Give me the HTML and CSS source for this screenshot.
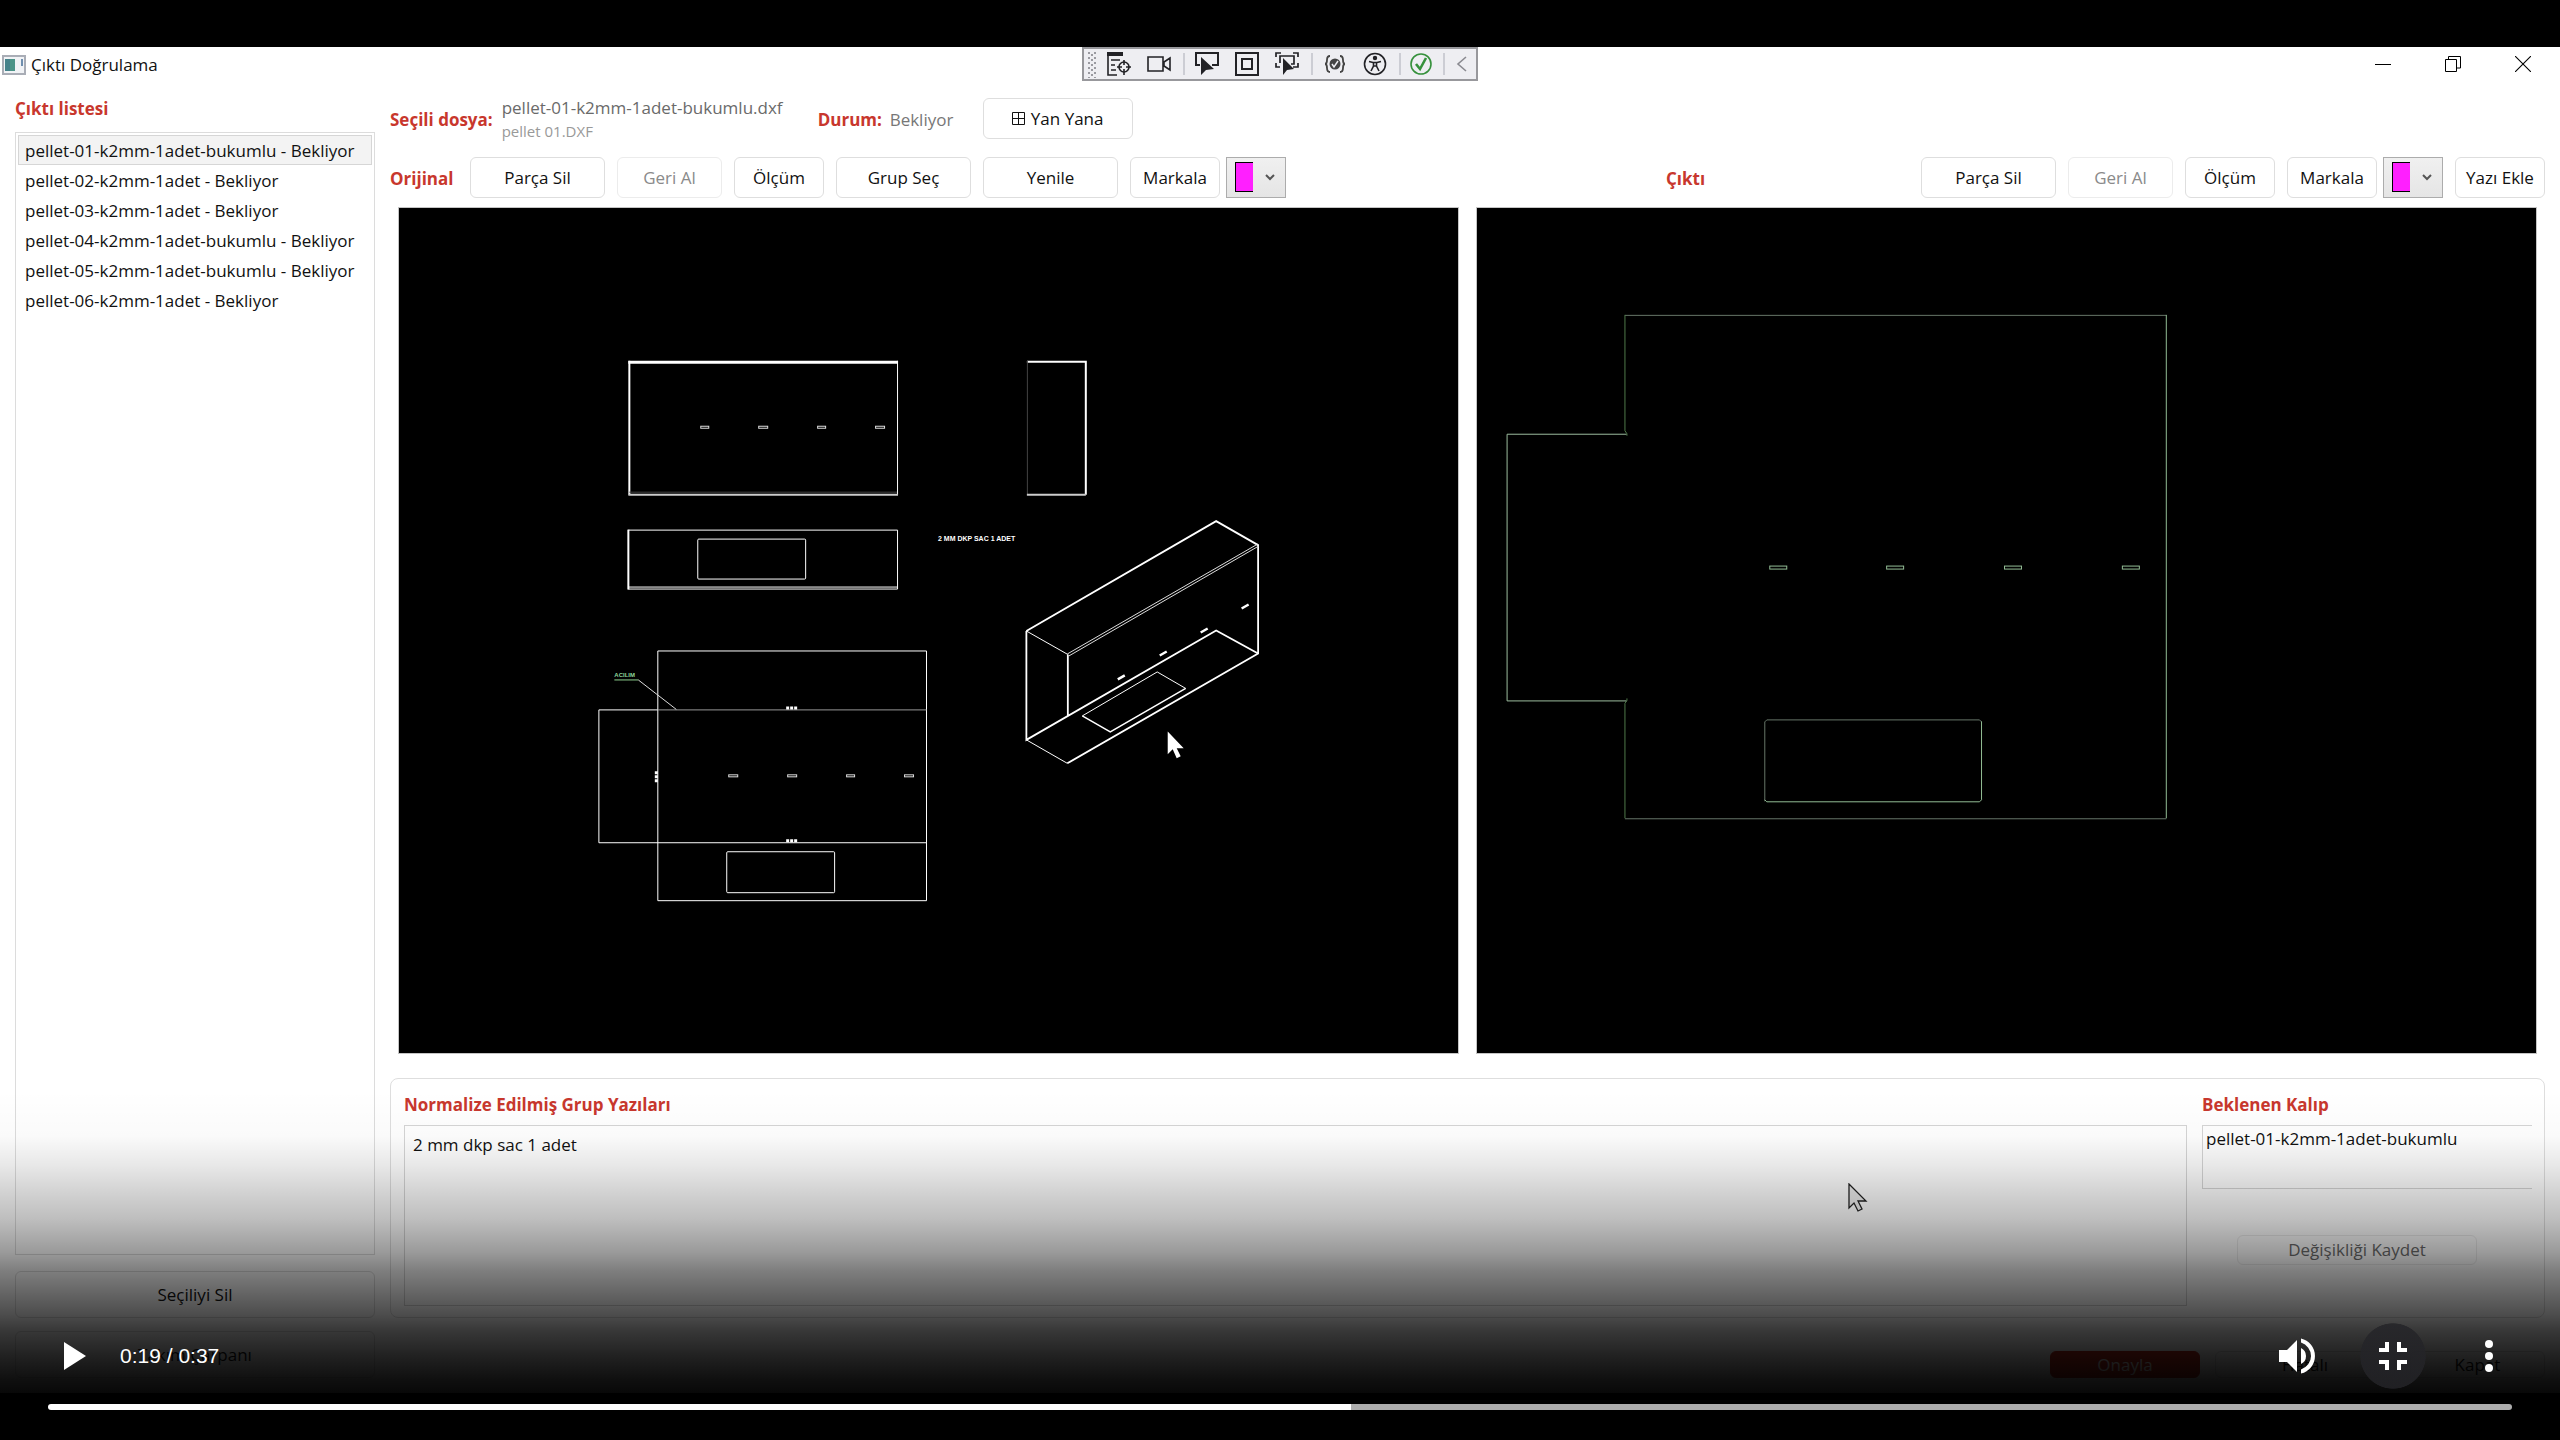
FILE: index.html
```html
<!DOCTYPE html>
<html lang="tr">
<head>
<meta charset="utf-8">
<title>Çıktı Doğrulama</title>
<link rel="stylesheet" href="styles.css">
</head>
<body>
<div class="player">
  <div class="stage">
    <header class="titlebar">
      <div class="titlebar-name">
        <svg class="app-icon" width="24" height="20" viewBox="0 0 24 20" aria-hidden="true"><rect x="1" y="1" width="22" height="18" fill="#f1f3f6" stroke="#a9adb6" stroke-width="2"/><rect x="3" y="4" width="10" height="12" fill="#4c9488"/><path d="M3 4h5v12H3z" fill="#3d6f8c" opacity=".5"/><path d="M20 4v7" stroke="#6f8faf" stroke-width="2"/></svg>
        <span>Çıktı Doğrulama</span>
      </div>
      <div class="debug-bar">
        <svg class="grip" width="15" height="30" viewBox="0 0 15 30" aria-hidden="true"><path d="M5 3v26M11 3v26" stroke="#9a9aa0" stroke-width="2" stroke-dasharray="2 3"/><path d="M8 5v22" stroke="#9a9aa0" stroke-width="2" stroke-dasharray="2 3"/></svg>
        <button class="tool" aria-label="Canlı görsel ağaç"><svg width="24" height="24" viewBox="0 0 24 24" fill="none" stroke="#222226" stroke-width="1.6"><path d="M0 0h16v4H0z" fill="#222226" stroke="none"/><path d="M1 3v20h9M4 8h9M4 13h4M4 18h5"/><circle cx="17" cy="15" r="5"/><path d="M17 8v5M17 17v6M10 15h5M19 15h5"/></svg></button>
        <button class="tool" aria-label="Kayıt"><svg width="24" height="24" viewBox="0 0 24 24" fill="none" stroke="#222226" stroke-width="1.6"><path d="M1 5h15v14H1zM17 10l6-4v12l-6-4z"/></svg></button>
        <span class="sep"></span>
        <button class="tool" aria-label="Öğe seç"><svg width="24" height="24" viewBox="0 0 24 24"><path d="M5 13H1V1h22v12h-6" fill="none" stroke="#222226" stroke-width="2"/><path d="M6 5v18l5-5 8-1z" fill="#222226"/></svg></button>
        <button class="tool" aria-label="Yerleşim süsleri"><svg width="24" height="24" viewBox="0 0 24 24" fill="none" stroke="#222226" stroke-width="2"><path d="M1 1h22v22H1zM7 7h10v10H7z"/></svg></button>
        <button class="tool" aria-label="Odaklı öğe"><svg width="24" height="24" viewBox="0 0 24 24"><path d="M1 5V1h5M18 1h5v4M1 11v4h4M18 15h5v-4M5 11V4h14v8h-3" fill="none" stroke="#222226" stroke-width="1.7"/><path d="M8 6v17l4-5 7-1z" fill="#222226"/></svg></button>
        <span class="sep"></span>
        <button class="tool" aria-label="Bağlama hataları"><svg width="24" height="24" viewBox="0 0 24 24"><path d="M7 4Q4 4 4 8q0 4-2 4 2 0 2 4 0 4 3 4M17 4q3 0 3 4 0 4 2 4-2 0-2 4 0 4-3 4" fill="none" stroke="#444" stroke-width="1.800"/><circle cx="12" cy="12" r="5.500" fill="#444"/><path d="M9 12l2 3 4-6" fill="none" stroke="#eeeef2" stroke-width="1.5"/></svg></button>
        <button class="tool" aria-label="Erişilebilirlik"><svg width="24" height="24" viewBox="0 0 24 24" fill="none" stroke="#222226" stroke-width="1.6"><circle cx="12" cy="12" r="10.5"/><circle cx="12" cy="6" r="1.4" fill="#222226"/><path d="M6 9.500l4 1h4l4-1M10.500 10v4l-2.500 5M13.500 10v4l2.500 5M10.500 14h3"/></svg></button>
        <span class="sep"></span>
        <button class="tool tool-mid" aria-label="Etkin"><svg width="24" height="24" viewBox="0 0 24 24" fill="none" stroke="#36913c"><circle cx="12" cy="12" r="10" stroke-width="1.6"/><path d="M7 12l4 5 6-11" stroke-width="2.6"/></svg></button>
        <span class="sep"></span>
        <button class="tool tool-small" aria-label="Daralt"><svg width="24" height="24" viewBox="0 0 24 24" fill="none" stroke="#8a8a90" stroke-width="1.6"><path d="M16 5l-8 7 8 7"/></svg></button>
      </div>
      <div class="window-buttons">
        <button aria-label="Simge durumuna küçült"><svg width="16" height="16" viewBox="0 0 16 16" fill="none" stroke="#000"><path d="M0 8.500h16"/></svg></button>
        <button aria-label="Geri yükle"><svg width="16" height="16" viewBox="0 0 16 16" fill="none" stroke="#000"><path d="M.5 3.500h11v12H.5zM3.500 3V.5h12v11.500H12"/></svg></button>
        <button aria-label="Kapat"><svg width="16" height="16" viewBox="0 0 16 16" fill="none" stroke="#000"><path d="M0 0l16 16M16 0L0 16" stroke-width="1.100"/></svg></button>
      </div>
    </header>

    <div class="workspace">
      <aside class="sidebar">
        <h2 class="heading" id="list-title">Çıktı listesi</h2>
        <ul class="file-list" role="listbox" aria-labelledby="list-title">
          <li role="option" aria-selected="true">pellet-01-k2mm-1adet-bukumlu - Bekliyor</li>
          <li role="option">pellet-02-k2mm-1adet - Bekliyor</li>
          <li role="option">pellet-03-k2mm-1adet - Bekliyor</li>
          <li role="option">pellet-04-k2mm-1adet-bukumlu - Bekliyor</li>
          <li role="option">pellet-05-k2mm-1adet-bukumlu - Bekliyor</li>
          <li role="option">pellet-06-k2mm-1adet - Bekliyor</li>
        </ul>
        <button class="btn btn-side">Seçiliyi Sil</button>
        <button class="btn btn-side">Takım Çarpanı</button>
      </aside>

      <main class="main">
        <div class="file-bar">
          <span class="heading">Seçili dosya:</span>
          <div class="file-names"><span>pellet-01-k2mm-1adet-bukumlu.dxf</span><small>pellet 01.DXF</small></div>
          <span class="heading status-label">Durum:</span>
          <span class="status">Bekliyor</span>
          <button class="btn btn-view"><svg width="13" height="13" viewBox="0 0 13 13" fill="none" stroke="#111" aria-hidden="true"><path d="M.5 .5h12v12H.5zM6.500 .5v12M.5 6.500h12"/></svg>Yan Yana</button>
        </div>

        <div class="panes">
          <section class="pane">
            <div class="pane-bar">
              <h2 class="heading pane-title">Orijinal</h2>
              <button class="btn btn-lg">Parça Sil</button>
              <button class="btn btn-md" disabled>Geri Al</button>
              <button class="btn btn-sm">Ölçüm</button>
              <button class="btn btn-lg">Grup Seç</button>
              <button class="btn btn-lg">Yenile</button>
              <div class="mark-group">
                <button class="btn btn-sm">Markala</button>
                <span class="color-select"><select aria-label="İşaret rengi"><option value="#ff1fff" aria-label="Macenta"></option></select><i class="swatch"></i><svg class="chevron" width="10" height="8" viewBox="0 0 10 8" fill="none" stroke="#555" stroke-width="2"><path d="M1 1l4 4 4-4"/></svg></span>
              </div>
            </div>
            <svg class="canvas" viewBox="399 208 1059 846" fill="none" stroke="#fff">
              <path d="M628 362.500H898" stroke-width="3"/><path d="M629 361V495" stroke-width="2"/><path d="M897.500 361V495"/><path d="M628 495H898" stroke="#ccc" stroke-width="2"/><path d="M629 492.500H897" stroke="#444"/>
              <path d="M1027 362H1087M1086 361V495" stroke-width="2"/><path d="M1027.500 361V495" stroke="#444"/><path d="M1027 495H1086" stroke="#ccc" stroke-width="2"/>
              <g stroke="#ddd"><rect x="700.500" y="426.500" width="8" height="2"/><rect x="758.500" y="426.500" width="9" height="2"/><rect x="817.500" y="426.500" width="8" height="2"/><rect x="875.500" y="426.500" width="9" height="2"/>
              <rect x="728.500" y="775.500" width="9" height="2"/><rect x="787.500" y="775.500" width="9" height="2"/><rect x="846.500" y="775.500" width="8" height="2"/><rect x="904.500" y="775.500" width="9" height="2"/></g>
              <path d="M628 530.500H897.500V589.500H628M628 587.500H897"/><path d="M628 530V590" stroke-width="2"/>
              <rect x="697.500" y="539.500" width="108" height="40" rx="1"/>
              <text class="cad-text" x="938" y="541">2 MM DKP SAC 1 ADET</text>
              <g stroke-width="1.800"><path d="M1026.500 631.500L1216.500 521.500L1258.500 545.500V654L1067.500 764M1026.500 631.500V740.500L1216.500 631L1258.500 654M1068 655V716"/></g>
              <path d="M1026.500 631.500L1068 655M1026.500 740.500L1067.500 764"/>
              <path d="M1067.500 654.500L1258 544.500M1069 656.500L1259 546.500" stroke="#ddd"/>
              <path d="M1082.500 716.500L1157.500 672.500L1186 689"/><path d="M1082.500 716.500L1110.500 732.500L1186 689" stroke-width="1.500"/>
              <path d="M1242 609l7-4M1201 633l7-4M1160 656l7-4M1118 680l7-4" stroke-width="2.500"/>
              <path d="M657.500 651.500H926.500V901.500H657.500zM657.500 710.500H598.500V843.500H926.500"/><path d="M657.500 710.500H926.500" stroke="#999"/>
              <rect x="726.500" y="852.500" width="108" height="41" rx="1"/>
              <path d="M786 708.500h12M786 841.500h12M656 772v12" stroke-width="3" stroke-dasharray="3 1"/>
              <text class="cad-text cad-green" x="614" y="678">ACILIM</text>
              <path d="M614 680.500H638" stroke="#8fd08f"/><path d="M638 680.500L676 710" stroke="#ddd"/>
              <path d="M1168 732v23l5-5 4 9 4-2-4-8h7z" fill="#fff" stroke="none"/>
            </svg>
          </section>

          <section class="pane">
            <div class="pane-bar pane-bar-right">
              <h2 class="heading pane-title">Çıktı</h2>
              <button class="btn btn-lg">Parça Sil</button>
              <button class="btn btn-md" disabled>Geri Al</button>
              <button class="btn btn-sm">Ölçüm</button>
              <div class="mark-group">
                <button class="btn btn-sm">Markala</button>
                <span class="color-select"><select aria-label="İşaret rengi"><option value="#ff1fff" aria-label="Macenta"></option></select><i class="swatch"></i><svg class="chevron" width="10" height="8" viewBox="0 0 10 8" fill="none" stroke="#555" stroke-width="2"><path d="M1 1l4 4 4-4"/></svg></span>
              </div>
              <button class="btn btn-sm">Yazı Ekle</button>
            </div>
            <svg class="canvas" viewBox="1477 208 1059 846" fill="none" stroke="#93bd95">
              <path d="M1624.500 315.500H2166.500M1624.500 819.500H2166.500" stroke="#667568"/>
              <path d="M1624.500 315V431l2 3v2M1624.500 819V704l2-3v-2" stroke="#4f7a49"/>
              <path d="M2166.500 315V819"/>
              <path d="M1626 434.500H1506.500V701.500H1626" stroke="#9dbd9f"/>
              <rect x="1769.500" y="566.500" width="17" height="3"/><rect x="1886.500" y="566.500" width="17" height="3"/><rect x="2004.500" y="566.500" width="17" height="3"/><rect x="2122.500" y="566.500" width="17" height="3"/>
              <path d="M1764.500 802V722.500l2-2H1979.500l2 2" stroke="#667568"/><path d="M1981.500 722V800.500l-2 2H1766.500l-2-2"/>
            </svg>
          </section>
        </div>

        <section class="details">
          <div class="detail-notes">
            <label class="heading" for="notes">Normalize Edilmiş Grup Yazıları</label>
            <textarea class="field field-notes" id="notes">2 mm dkp sac 1 adet</textarea>
          </div>
          <div class="detail-mold">
            <label class="heading" for="mold">Beklenen Kalıp</label>
            <textarea class="field field-mold" id="mold">pellet-01-k2mm-1adet-bukumlu</textarea>
            <button class="btn btn-save" disabled>Değişikliği Kaydet</button>
          </div>
        </section>

        <footer class="actions">
          <button class="btn btn-approve">Onayla</button>
          <button class="btn btn-reject">Hatalı</button>
          <button class="btn btn-close">Kapat</button>
        </footer>
      </main>
    </div>
    <svg class="pointer" width="20" height="29" viewBox="0 0 20 29" aria-hidden="true"><path d="M1 1v24l5-5 4 8 4-2-4-8h8z" fill="#eee" stroke="#222" stroke-width="1.300"/></svg>
  </div>

  <div class="controls">
    <div class="control-row">
      <button class="control" aria-label="Oynat"><svg width="48" height="48" viewBox="0 0 24 24" fill="#fff"><path d="M8 5v14l11-7z"/></svg></button>
      <span class="time">0:19 / 0:37</span>
      <button class="control" aria-label="Ses"><svg width="48" height="48" viewBox="0 0 24 24" fill="#fff"><path d="M3 9v6h4l5 5V4L7 9H3zm13.500 3A4.500 4.500 0 0 0 14 7.970v8.050A4.470 4.470 0 0 0 16.500 12zM14 3.230v2.060a7 7 0 0 1 0 13.420v2.060a9 9 0 0 0 0-17.540z"/></svg></button>
      <button class="control control-active" aria-label="Tam ekrandan çık"><svg width="48" height="48" viewBox="0 0 24 24" fill="#fff"><path d="M5 16h3v3h2v-5H5v2zm3-8H5v2h5V5H8v3zm6 11h2v-3h3v-2h-5v5zm2-11V5h-2v5h5V8h-3z"/></svg></button>
      <button class="control" aria-label="Diğer seçenekler"><svg width="48" height="48" viewBox="0 0 24 24" fill="#fff"><circle cx="12" cy="6" r="2"/><circle cx="12" cy="12" r="2"/><circle cx="12" cy="18" r="2"/></svg></button>
    </div>
    <input class="timeline" type="range" min="0" max="1000" value="529" aria-label="Video zaman çizelgesi">
  </div>
</div>
</body>
</html>
```

FILE: styles.css
```css
* { box-sizing: border-box; }

body {
  margin: 0;
  background: #000;
  color: #111;
  font: 17px/24px "Open Sans", "Noto Sans", sans-serif;
}

button, select, textarea, input { margin: 0; font: inherit; color: inherit; }
button { padding: 0; border: 0; background: none; }
svg { display: block; flex: none; }

.player {
  position: relative;
  display: flex;
  flex-direction: column;
  min-height: 100vh;
  padding: 47px 0;
}

.stage {
  position: relative;
  flex: 1;
  display: flex;
  flex-direction: column;
  background: #fff;
}

/* Title bar */
.titlebar { display: grid; grid-template-columns: 1fr auto 1fr; height: 34px; }
.titlebar-name { display: flex; align-items: center; gap: 5px; padding: 2px 0 0 2px; }
.debug-bar {
  display: flex;
  align-items: center;
  border: 2px solid #98989c;
  background: #eeeef2;
}
.tool { display: grid; place-items: center; width: 40px; height: 30px; }
.tool-mid { width: 36px; }
.tool-small { width: 29px; }
.sep { display: grid; width: 8px; height: 22px; }
.sep::before { content: ""; width: 2px; margin-left: 4px; background: #cccdd4; }
.window-buttons { display: flex; justify-content: flex-end; padding-right: 2px; }
.window-buttons button { display: grid; place-items: center; width: 70px; }

/* Shared pieces */
.heading { margin: 0; color: #c8372d; font-size: 17px; line-height: 28px; font-weight: 700; }
.btn {
  display: flex;
  align-items: center;
  justify-content: center;
  height: 41px;
  border: 1px solid #dedede;
  border-radius: 6px;
  background: #fff;
  white-space: nowrap;
}
.btn:disabled { color: #8a8a8a; border-color: #ececec; }
.btn-lg { width: 135px; }
.btn-md { width: 105px; }
.btn-sm { width: 90px; }

/* Workspace */
.workspace {
  flex: 1;
  display: grid;
  grid-template-columns: 360px 1fr;
  gap: 15px;
  padding: 0 15px;
}
.sidebar { display: flex; flex-direction: column; padding: 14px 0 15px; }
.file-list {
  flex: 1;
  margin: 9px 0 16px;
  padding: 2px;
  border: 1px solid #dcdcdc;
  list-style: none;
}
.file-list li {
  height: 30px;
  padding: 0 6px;
  border: 1px solid transparent;
  line-height: 30px;
  white-space: nowrap;
}
.file-list li[aria-selected="true"] { border-color: #d6d6d6; background: #f3f3f3; }
.btn-side { height: 47px; }
.btn-side + .btn-side { margin-top: 13px; }

.main { display: flex; flex-direction: column; padding: 17px 0 15px; min-width: 0; }
.file-bar { display: flex; align-items: center; height: 41px; margin-bottom: 18px; }
.file-bar > .heading, .status, .pane-title { padding-top: 2px; }
.file-names { display: flex; flex-direction: column; width: 288px; margin: 0 28px 0 9px; color: #6a6a6a; white-space: nowrap; }
.file-names small { font-size: 15px; line-height: 22px; color: #999; }
.status-label { width: 72px; }
.status { width: 93px; color: #777; }
.btn-view { width: 150px; gap: 6px; }

.panes { flex: 1; display: grid; grid-template-columns: 1fr 1fr; gap: 1px; }
.pane { display: flex; flex-direction: column; min-width: 0; }
.pane-bar { display: flex; align-items: center; gap: 12px; margin-bottom: 9px; }
.pane-title { width: 68px; }
.pane-bar-right .pane-title { width: auto; margin-right: auto; padding-left: 198px; }
.mark-group { display: flex; gap: 6px; }
.color-select { display: grid; grid-template-columns: 28px 1fr; align-items: center; width: 60px; height: 41px; }
.color-select select {
  grid-area: 1 / 1 / 2 / 3;
  width: 100%;
  height: 100%;
  appearance: none;
  border: 1px solid #acacac;
  border-radius: 0;
  background: linear-gradient(#f0f0f0, #e5e5e5);
}
.swatch {
  grid-area: 1 / 1;
  width: 18px;
  height: 30px;
  margin: 0 0 2px 9px;
  border: 1px solid #000;
  border-right: 0;
  background: #ff1fff;
  pointer-events: none;
}
.chevron { grid-area: 1 / 2; justify-self: center; pointer-events: none; }
.canvas {
  flex: 1 1 0;
  width: calc(100% - 16px);
  min-height: 0;
  margin: 0 8px;
  border: 1px solid #c4c4c4;
  background: #000;
}
.cad-text { fill: #fff; stroke: none; font: bold 7px "Liberation Sans", sans-serif; }
.cad-green { fill: #8fd89a; font-size: 6px; }

.details {
  display: grid;
  grid-template-columns: 1fr 330px;
  gap: 15px;
  margin: 24px 0 33px;
  padding: 12px 12px 11px 13px;
  border: 1px solid #dedede;
  border-radius: 8px;
}
.detail-notes, .detail-mold { display: flex; flex-direction: column; gap: 6px; }
.field { display: block; width: 100%; resize: none; border: 1px solid #d5d5d5; border-radius: 0; background: #fff; outline: 0; }
.field-notes { height: 181px; padding: 7px 8px; }
.field-mold { height: 64px; padding: 1px 3px; border-right: 0; }
.btn-save { width: 240px; height: 30px; margin: 40px 0 0 35px; }
.btn-save:disabled { color: #6c6c6c; }

.actions { display: flex; justify-content: flex-end; gap: 15px; }
.actions .btn { height: 27px; }
.btn-approve { width: 150px; border-color: #c42b1c; background: #c42b1c; color: #fff; }
.btn-reject { width: 180px; }
.btn-close { width: 135px; }

/* Mouse pointer captured in the recording */
.pointer { position: absolute; left: 72.2%; top: 84.4%; }

/* Player controls over the video */
.controls {
  position: absolute;
  inset: auto 0 0 0;
  display: flex;
  flex-direction: column;
  height: 350px;
  padding: 233px 0 30px;
  background: linear-gradient(
    rgba(0, 0, 0, 0) 0,
    rgba(0, 0, 0, .02) 46px,
    rgba(0, 0, 0, .09) 75px,
    rgba(0, 0, 0, .17) 100px,
    rgba(0, 0, 0, .26) 130px,
    rgba(0, 0, 0, .4) 163px,
    rgba(0, 0, 0, .5) 180px,
    rgba(0, 0, 0, .7) 225px,
    rgba(0, 0, 0, .78) 240px,
    rgba(0, 0, 0, .87) 266px,
    rgba(0, 0, 0, .94) 290px,
    rgba(0, 0, 0, .97) 303px,
    #000 350px
  );
}
.control-row { display: flex; align-items: center; padding: 0 23px 0 24px; }
.control { display: grid; place-items: center; width: 96px; height: 66px; }
.control-active { background: radial-gradient(circle closest-side, rgba(36, 36, 40, .85) 98%, transparent); }
.time { margin-right: auto; color: #fff; font: 21px/24px "Liberation Sans", sans-serif; }
.timeline {
  appearance: none;
  display: block;
  width: auto;
  height: 6px;
  margin: 15px 48px 0;
  border-radius: 3px;
  background: linear-gradient(90deg, #fff 52.9%, #adadad 52.9%);
}
.timeline::-webkit-slider-thumb { appearance: none; width: 0; height: 0; }
```
